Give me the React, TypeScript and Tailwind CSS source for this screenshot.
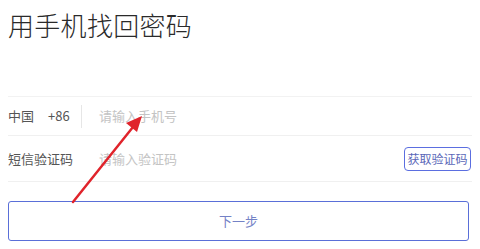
const FONT = { fontFamily: '"Noto Sans CJK SC", "Noto Sans", sans-serif' };

export default function App() {
  return (
    <div className="w-[480px] h-[249px] bg-white overflow-hidden relative" style={FONT}>
      <div className="px-2">
        <div className="h-[97px] border-b border-[#f2f2f2] pt-[6px]">
          <h1 className="text-[26px] leading-[38px] text-[#2a2a2a] font-light tracking-[0.3px]">用手机找回密码</h1>
        </div>

        <div className="h-[39px] flex items-center border-b border-[#f0f0f0] text-[13px]">
          <span className="text-[#555] w-[40px]">中国</span>
          <span className="text-[#555] w-[33px]">+86</span>
          <span className="w-px h-[23px] bg-[#e6e6e6]" />
          <span className="ml-[17px] text-[#c4c4c4]">请输入手机号</span>
        </div>

        <div className="h-[46px] flex items-center border-b border-[#f0f0f0] text-[13px]">
          <span className="text-[#555] w-[91px]">短信验证码</span>
          <span className="text-[#c4c4c4]">请输入验证码</span>
          <button className="ml-auto mr-px w-[67px] h-[24px] rounded-[4px] border-[1.5px] border-[#5b6ee0] text-[12px] text-[#5a67b8] flex items-center justify-center">
            获取验证码
          </button>
        </div>

        <button className="mt-[19px] w-[461px] h-[40px] rounded-[3px] border-[1.5px] border-[#5a6fd8] text-[13px] text-[#7482c6] flex items-center justify-center">
          下一步
        </button>
      </div>

      <svg className="absolute left-0 top-0 pointer-events-none" width="480" height="249">
        <line x1="73" y1="202" x2="133" y2="127" stroke="#e0232b" strokeWidth="2.5" strokeLinecap="round" />
        <polygon points="142,116 126,123 137,132" fill="#e0232b" />
      </svg>
    </div>
  );
}
